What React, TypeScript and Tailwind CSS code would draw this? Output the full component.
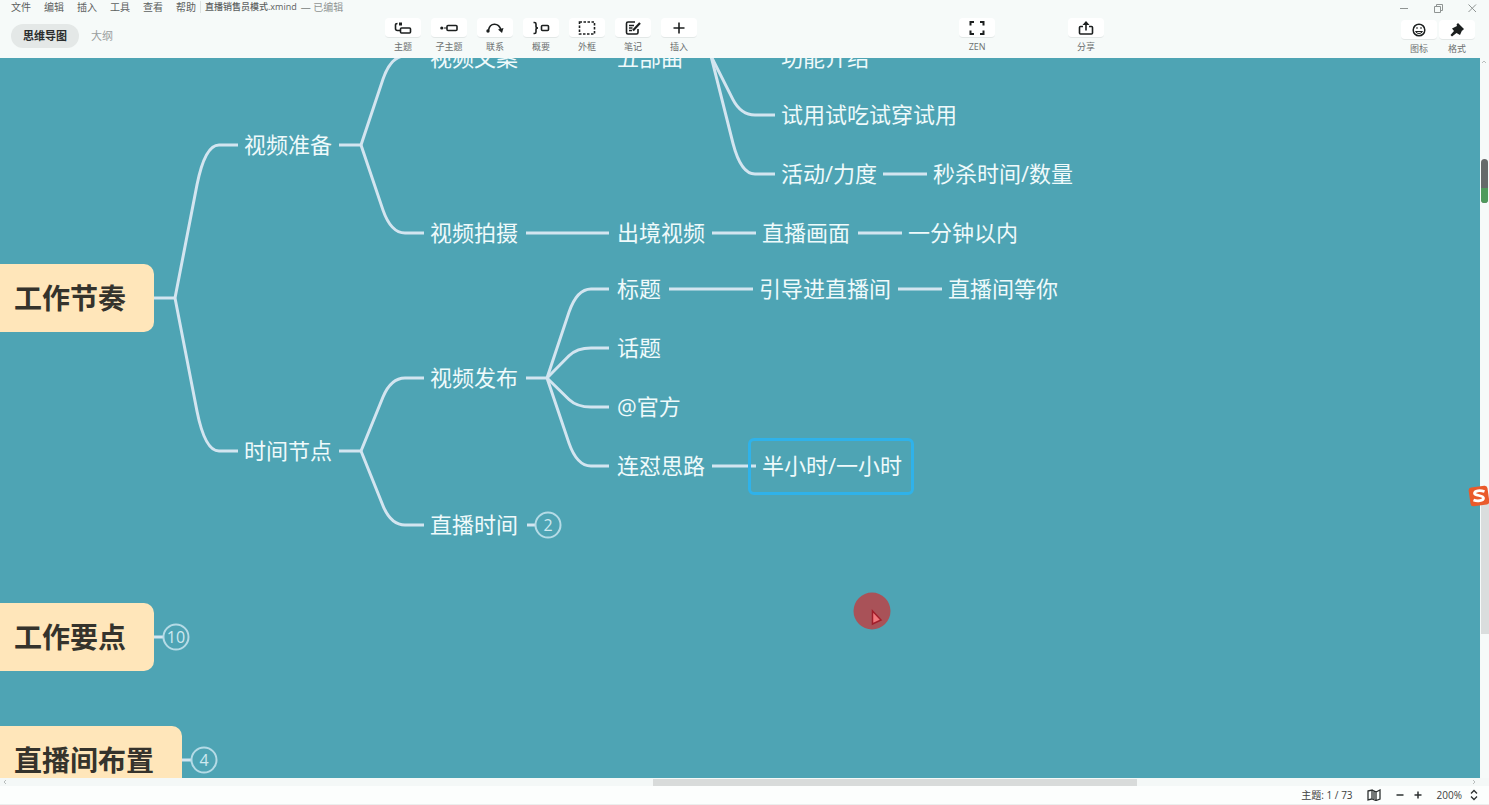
import type { ReactNode } from "react";

const MENUS = ["文件", "编辑", "插入", "工具", "查看", "帮助"];

// x is the left edge of the text, y its middle line
const TOPICS = [
  { x: 430, y: 0, text: "视频文案" },
  { x: 617, y: 0, text: "五部曲" },
  { x: 781, y: 0, text: "功能介绍" },
  { x: 781, y: 57, text: "试用试吃试穿试用" },
  { x: 244, y: 87, text: "视频准备" },
  { x: 781, y: 116, text: "活动/力度" },
  { x: 933, y: 116, text: "秒杀时间/数量" },
  { x: 430, y: 175, text: "视频拍摄" },
  { x: 617, y: 175, text: "出境视频" },
  { x: 762, y: 175, text: "直播画面" },
  { x: 908, y: 175, text: "一分钟以内" },
  { x: 617, y: 231, text: "标题" },
  { x: 759, y: 231, text: "引导进直播间" },
  { x: 948, y: 231, text: "直播间等你" },
  { x: 617, y: 290, text: "话题" },
  { x: 430, y: 320, text: "视频发布" },
  { x: 617, y: 349, text: "@官方" },
  { x: 244, y: 393, text: "时间节点" },
  { x: 617, y: 408, text: "连怼思路" },
  { x: 762, y: 408, text: "半小时/一小时" },
  { x: 430, y: 467, text: "直播时间" },
];

const MAIN_TOPICS = [
  { y: 206, text: "工作节奏" },
  { y: 545, text: "工作要点" },
  { y: 668, text: "直播间布置" },
];

const COUNTERS = [
  { x: 548, y: 467, n: 2 },
  { x: 176, y: 579, n: 10 },
  { x: 204, y: 702, n: 4 },
];

// [x1, x2, y]
const LINES = [
  [154, 175, 240],
  [339, 361, 87],
  [339, 361, 393],
  [526, 609, -2],
  [691, 775, -2],
  [883, 927, 116],
  [526, 609, 175],
  [712, 756, 175],
  [858, 902, 175],
  [526, 547, 320],
  [669, 753, 231],
  [898, 942, 231],
  [712, 756, 408],
  [527, 535, 467],
  [154, 163, 579],
  [182, 191, 702],
];

// [x1, y1, x2, y2]
const BRANCHES = [
  [175, 240, 238, 87],
  [175, 240, 238, 393],
  [361, 87, 424, -2],
  [361, 87, 424, 175],
  [361, 393, 424, 320],
  [361, 393, 424, 467],
  [711, -2, 775, 57],
  [711, -2, 775, 116],
  [547, 320, 609, 231],
  [547, 320, 609, 290],
  [547, 320, 609, 349],
  [547, 320, 609, 408],
];

function branchPath([x1, y1, x2, y2]: number[]) {
  const bend = y1 + (y2 - y1) * 0.74;
  return `M${x1} ${y1}L${x1 + 22} ${bend}Q${x1 + 30} ${y2} ${x1 + 44} ${y2}H${x2}`;
}

function Icon({ children }: { children: ReactNode }) {
  return (
    <svg viewBox="0 0 18 18" className="h-[18px] w-[18px]" fill="none" stroke="#1c1f1f" strokeWidth="1.6">
      {children}
    </svg>
  );
}

const TOOLS = [
  {
    label: "主题",
    icon: (
      <Icon>
        <rect x="6.5" y="9" width="10" height="5" rx="1" />
        <path d="M3.5 4.5Q1.5 4.5 1.5 6V9.5Q1.5 11.5 3.5 11.5H6" />
        <path d="M5 5H8" strokeWidth="3" />
      </Icon>
    ),
  },
  {
    label: "子主题",
    icon: (
      <Icon>
        <circle cx="1.8" cy="9" r="1.6" fill="#1c1f1f" stroke="none" />
        <path d="M4 9H7" strokeWidth="1" />
        <rect x="7" y="6.5" width="10" height="5" rx="1" />
      </Icon>
    ),
  },
  {
    label: "联系",
    icon: (
      <Icon>
        <circle cx="2" cy="12" r="1.7" fill="#1c1f1f" stroke="none" />
        <path d="M2.5 11C4 3.5 12.5 3 15 11" />
        <path d="M12 10.5L17.5 9L16 14Z" fill="#1c1f1f" stroke="none" />
      </Icon>
    ),
  },
  {
    label: "概要",
    icon: (
      <Icon>
        <path d="M1.5 3.5H2.5Q4 3.5 4 5V7.5Q4 9 6 9Q4 9 4 10.5V13Q4 14.5 2.5 14.5H1.5" />
        <rect x="9.5" y="6.5" width="7" height="5" rx="1" />
      </Icon>
    ),
  },
  {
    label: "外框",
    icon: (
      <Icon>
        <rect x="1.5" y="3" width="15" height="12" strokeDasharray="2.5 1.5" />
      </Icon>
    ),
  },
  {
    label: "笔记",
    icon: (
      <Icon>
        <path d="M11 3H4Q2.5 3 2.5 4.5V13.5Q2.5 15 4 15H12.5Q14 15 14 13.5V10" />
        <path d="M5 6.5H10M5 9H8.5M5 11.5H8" strokeWidth="1.3" />
        <path d="M16 4L9 11.5" strokeWidth="2.2" />
      </Icon>
    ),
  },
  {
    label: "插入",
    icon: (
      <Icon>
        <path d="M9 3.5V14.5M3.5 9H14.5" />
      </Icon>
    ),
  },
];

function Tool({ label, children }: { label: string; children: ReactNode }) {
  return (
    <button className="flex w-9 shrink-0 flex-col items-center gap-1">
      <span className="flex h-5 w-full items-center justify-center rounded-sm border-b border-[#e3e8e7] bg-white">
        {children}
      </span>
      <span className="text-[9px] leading-[10px] whitespace-nowrap text-[#6c7070]">{label}</span>
    </button>
  );
}

function Header() {
  return (
    <header className="flex h-[58px] shrink-0 bg-[#f6faf9]">
      <div className="flex w-[385px] shrink-0 flex-col gap-2 pl-[11px]">
        <nav className="flex h-[14px] items-center text-[10px] leading-[14px] whitespace-nowrap text-[#5c6060]">
          <div className="flex gap-[13px]">
            {MENUS.map((m) => (
              <button key={m}>{m}</button>
            ))}
          </div>
          <div className="mx-1 h-3 w-px bg-[#dde2e1]" />
          <span className="text-[9px] font-medium">直播销售员模式.xmind</span>
          <span className="ml-1 text-[#8f9493]">— 已编辑</span>
        </nav>
        <div className="flex items-center gap-3 pt-0.5 text-[11px] leading-6">
          <button className="h-6 rounded-full bg-[#e4e8e7] px-3 font-bold text-[#2a2d2d]">思维导图</button>
          <button className="text-[#9a9e9e]">大纲</button>
        </div>
      </div>

      <div className="flex shrink-0 gap-[10px] pt-[18px]">
        {TOOLS.map((t) => (
          <Tool key={t.label} label={t.label}>
            {t.icon}
          </Tool>
        ))}
      </div>
      <div className="grow-8" />
      <div className="flex shrink-0 gap-[73px] pt-[18px]">
        <Tool label="ZEN">
          <Icon>
            <path d="M2.5 6.5V3H6M12 3H15.5V6.5M15.5 11.5V15H12M6 15H2.5V11.5" strokeWidth="2" />
          </Icon>
        </Tool>
        <Tool label="分享">
          <Icon>
            <path d="M6 7.5H3.5Q2.5 7.5 2.5 8.5V14Q2.5 15 3.5 15H14.5Q15.5 15 15.5 14V8.5Q15.5 7.5 14.5 7.5H12" />
            <path d="M9 11.5V4" />
            <path d="M5.5 6L9 2L12.5 6Z" fill="#1c1f1f" stroke="none" />
          </Icon>
        </Tool>
      </div>
      <div className="grow-9" />

      <div className="flex shrink-0 flex-col gap-1 pr-3">
        <div className="flex h-4 items-center justify-end gap-6 text-[#8f9493]">
          <button aria-label="最小化">
            <svg viewBox="0 0 10 10" className="h-[10px] w-[10px]" fill="none" stroke="currentColor">
              <path d="M1 5.5H9" />
            </svg>
          </button>
          <button aria-label="还原">
            <svg viewBox="0 0 10 10" className="h-[10px] w-[10px]" fill="none" stroke="currentColor">
              <path d="M1.5 3.5H7.5V9.5H1.5ZM3.5 3.5V1.5H9.5V7.5H7.5" />
            </svg>
          </button>
          <button aria-label="关闭">
            <svg viewBox="0 0 10 10" className="h-[10px] w-[10px]" fill="none" stroke="currentColor">
              <path d="M1.5 1.5L9 9M9 1.5L1.5 9" />
            </svg>
          </button>
        </div>
        <div className="flex justify-center gap-0.5">
          <Tool label="图标">
            <Icon>
              <circle cx="9" cy="9" r="5.8" strokeWidth="1.5" />
              <path d="M5.5 10.5H12.5Q11.5 12.5 9 12.5Q6.5 12.5 5.5 10.5Z" strokeWidth="1" />
              <path d="M7 6V8M11 6V8" strokeWidth="1" />
            </Icon>
          </Tool>
          <Tool label="格式">
            <Icon>
              <path
                d="M10 2L16 8L14.5 9.5L14 9.5L12 14L8.5 12L4 15.5L2.5 14L6 10L4 7.5L9 5L8.5 3.5Z"
                fill="#1c1f1f"
                stroke="none"
              />
            </Icon>
          </Tool>
        </div>
      </div>
    </header>
  );
}

function Canvas() {
  return (
    <main className="relative min-w-0 flex-1 overflow-hidden bg-[#4ea4b4]">
      <svg className="absolute inset-0 h-full w-full" fill="none" stroke="#d3e5f0" strokeWidth="3" strokeLinejoin="round">
        {LINES.map(([x1, x2, y]) => (
          <path key={`${x1}-${y}`} d={`M${x1} ${y}H${x2}`} />
        ))}
        {BRANCHES.map((b) => (
          <path key={b.join("-")} d={branchPath(b)} />
        ))}
      </svg>

      {MAIN_TOPICS.map((t) => (
        <div
          key={t.text}
          className="absolute left-0 rounded-r-[10px] bg-[#ffe6ba] pr-7 pl-[14px] text-[28px] leading-[68px] font-bold whitespace-nowrap text-[#35332c]"
          style={{ top: t.y }}
        >
          {t.text}
        </div>
      ))}

      {TOPICS.map((t) => (
        <div
          key={t.text}
          className="absolute -translate-y-1/2 pb-0.5 text-[22px] leading-8 whitespace-nowrap text-[#effafb]"
          style={{ left: t.x, top: t.y }}
        >
          {t.text}
        </div>
      ))}
      <div className="absolute top-[380px] left-[748px] h-[57px] w-[166px] rounded-md border-3 border-[#2fb2ea]" />

      {COUNTERS.map((c) => (
        <button
          key={c.n}
          className="absolute flex h-[27px] w-[27px] -translate-x-1/2 -translate-y-1/2 items-center justify-center rounded-full border-2 border-[#b5dbe6] pb-0.5 text-base font-medium text-[#cfe9f0]"
          style={{ left: c.x, top: c.y }}
        >
          {c.n}
        </button>
      ))}

      {/* click highlight under the pointer */}
      <svg viewBox="0 0 38 38" className="absolute top-[534px] left-[853px] h-[38px] w-[38px]">
        <circle cx="19" cy="19" r="18.5" fill="#a95258" />
        <path d="M19.5 19L28 28L19.5 32Z" fill="#f2777c" stroke="#a11e2a" strokeWidth="1.5" />
      </svg>
    </main>
  );
}

function StatusBar() {
  return (
    <footer className="flex h-[19px] shrink-0 items-center justify-end border-b border-[#eceeed] bg-[#fcfefd] pr-[10px] text-[10px] text-[#3c4040]">
      <span>主题: 1 / 73</span>
      <button aria-label="导图" className="ml-[14px]">
        <svg viewBox="0 0 14 12" className="h-3 w-[14px]" fill="none" stroke="#2c3030" strokeWidth="1.3">
          <path d="M1 2L5 1V10L1 11ZM5 1L9 3V11.5L5 10M9 3L13 1V10L9 11.5M7 2V10" />
        </svg>
      </button>
      <button aria-label="缩小" className="ml-[14px]">
        <svg viewBox="0 0 10 10" className="h-[10px] w-[10px]" stroke="#2c3030" strokeWidth="1.5">
          <path d="M1.5 5H8.5" />
        </svg>
      </button>
      <button aria-label="放大" className="ml-2">
        <svg viewBox="0 0 10 10" className="h-[10px] w-[10px]" stroke="#2c3030" strokeWidth="1.5">
          <path d="M1.5 5H8.5M5 1.5V8.5" />
        </svg>
      </button>
      <span className="ml-[14px]">200%</span>
      <button aria-label="缩放比例" className="ml-[7px]">
        <svg viewBox="0 0 10 12" className="h-3 w-[10px]" fill="none" stroke="#2c3030" strokeWidth="1.3">
          <path d="M2 4.5L5 1.5L8 4.5M2 7.5L5 10.5L8 7.5" />
        </svg>
      </button>
    </footer>
  );
}

export default function App() {
  return (
    <div className="relative flex h-screen flex-col overflow-hidden bg-[#f6faf9] font-['Open_Sans','Noto_Sans_CJK_SC',sans-serif]">
      <Header />
      <div className="flex min-h-0 flex-1">
        <Canvas />
        <div className="relative w-[9px] shrink-0 bg-[#f6faf9]">
          <svg viewBox="0 0 8 8" className="h-2 w-2" fill="none" stroke="#b9bebd">
            <path d="M2 5L4 3L6 5" />
          </svg>
          <div className="absolute top-[62%] right-0 bottom-[20%] left-px bg-[#dadddd]" />
          <div className="absolute top-[14%] right-px left-px h-11 overflow-hidden rounded-full bg-[#666a6a]">
            <div className="mt-[29px] h-4 bg-[#4f9a5c]" />
          </div>
        </div>
      </div>
      <div className="flex h-2 shrink-0 items-center bg-[#f4f8f7]">
        <svg viewBox="0 0 8 8" className="mx-px h-2 w-2 shrink-0" fill="none" stroke="#b9bebd">
          <path d="M5 2L3 4L5 6" />
        </svg>
        <div className="grow-85" />
        <div className="h-[7px] w-[32.5%] bg-[#d8dbda]" />
        <div className="grow-44" />
        <svg viewBox="0 0 8 8" className="mr-[11px] h-2 w-2 shrink-0" fill="none" stroke="#b9bebd">
          <path d="M3 2L5 4L3 6" />
        </svg>
      </div>
      <StatusBar />

      {/* input method badge docked at the window edge */}
      <svg viewBox="0 0 22 22" className="absolute top-[485px] -right-px h-[22px] w-[22px]">
        <rect x="1.5" y="1.5" width="19" height="19" rx="3" fill="#ea5a2b" transform="rotate(-8 11 11)" />
        <path
          d="M16.5 6.5C12 5 6.5 5.5 6.5 8.2C6.5 11 15.5 10 15.5 13C15.5 16 9 16.5 5.5 15"
          fill="none"
          stroke="#fff"
          strokeWidth="2.8"
        />
      </svg>
    </div>
  );
}
